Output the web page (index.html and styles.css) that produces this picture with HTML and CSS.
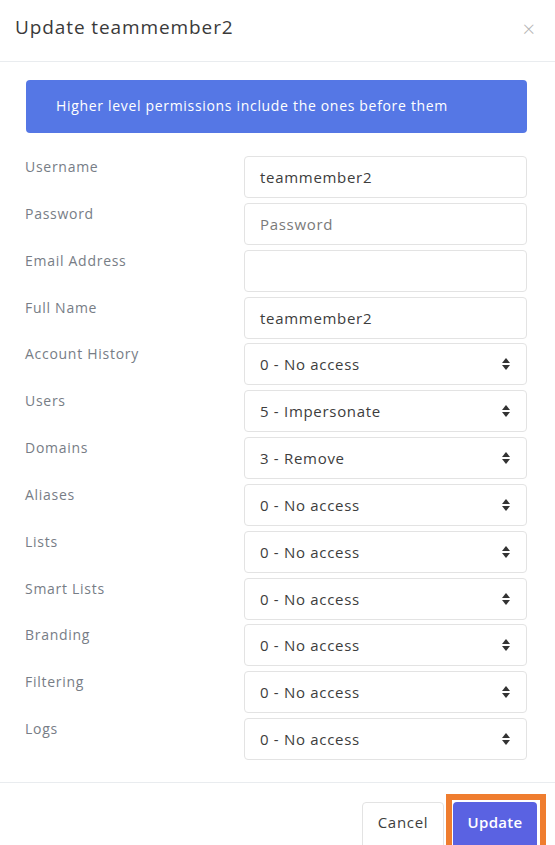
FILE: index.html
```html
<!DOCTYPE html>
<html>
<head>
<meta charset="utf-8">
<link rel="stylesheet" href="styles.css">
</head>
<body>
<div class="modal">
  <div class="modal-header">
    <h1 class="modal-title">Update teammember2</h1>
    <span class="close">&times;</span>
  </div>
  <div class="modal-body">
    <div class="alert">Higher level permissions include the ones before them</div>
    <div class="form">
      <label class="lbl">Username</label><div class="field">teammember2</div>
      <label class="lbl">Password</label><div class="field placeholder">Password</div>
      <label class="lbl">Email Address</label><div class="field"></div>
      <label class="lbl">Full Name</label><div class="field">teammember2</div>
      <label class="lbl">Account History</label><div class="field select">0 - No access<span class="arrows"></span></div>
      <label class="lbl">Users</label><div class="field select">5 - Impersonate<span class="arrows"></span></div>
      <label class="lbl">Domains</label><div class="field select">3 - Remove<span class="arrows"></span></div>
      <label class="lbl">Aliases</label><div class="field select">0 - No access<span class="arrows"></span></div>
      <label class="lbl">Lists</label><div class="field select">0 - No access<span class="arrows"></span></div>
      <label class="lbl">Smart Lists</label><div class="field select">0 - No access<span class="arrows"></span></div>
      <label class="lbl">Branding</label><div class="field select">0 - No access<span class="arrows"></span></div>
      <label class="lbl">Filtering</label><div class="field select">0 - No access<span class="arrows"></span></div>
      <label class="lbl">Logs</label><div class="field select">0 - No access<span class="arrows"></span></div>
    </div>
  </div>
  <div class="modal-footer">
    <button class="btn btn-cancel">Cancel</button>
    <div class="focus-ring"><button class="btn btn-update">Update</button></div>
  </div>
</div>
</body>
</html>
```
FILE: styles.css
```css
* { box-sizing: border-box; }
html, body { margin: 0; padding: 0; background: #fff; }
body {
  font-family: "Open Sans", "Noto Sans", sans-serif;
  color: #3d3d3d;
  width: 555px;
  height: 845px;
  overflow: hidden;
}
.modal { width: 555px; }
.modal-header {
  height: 62px;
  border-bottom: 1px solid #e9ecef;
  display: flex;
  align-items: center;
  justify-content: space-between;
  padding: 0 20px 0 15px;
}
.modal-title {
  margin: 0 0 8px 0;
  font-size: 19px;
  font-weight: 500;
  color: #3a3a3a;
  letter-spacing: 0.9px;
}
.close {
  font-size: 22px;
  color: #b5b5b5;
  font-weight: 300;
  margin-bottom: 6px;
}
.modal-body {
  padding: 18px 28px 22px 25px;
}
.alert {
  margin-left: 1px;
  height: 53px;
  background: #5577e5;
  border-radius: 4px;
  color: #fff;
  font-size: 14px;
  letter-spacing: 0.68px;
  display: flex;
  align-items: center;
  padding: 0 0 2px 30px;
}
.form {
  margin-top: 23px;
  display: grid;
  grid-template-columns: 219px 283px;
  row-gap: 4.85px;
}
.lbl {
  font-size: 14px;
  letter-spacing: 0.72px;
  color: #777d86;
  padding-top: 1px;
}
.field {
  height: 42px;
  border: 1px solid #e3e3e3;
  border-radius: 4px;
  display: flex;
  align-items: center;
  padding: 0 15px;
  font-size: 15px;
  letter-spacing: 0.7px;
  color: #3d3d3d;
  position: relative;
}
.field.placeholder { color: #7a7a7a; }
.arrows {
  position: absolute;
  right: 16px;
  top: 50%;
  width: 8px;
  height: 12px;
  margin-top: -6px;
}
.arrows::before, .arrows::after {
  content: "";
  position: absolute;
  left: 0;
  border-left: 4px solid transparent;
  border-right: 4px solid transparent;
}
.arrows::before { top: 0; border-bottom: 5px solid #333; }
.arrows::after { bottom: 0; border-top: 5px solid #333; }
.modal-footer {
  border-top: 1px solid #e9ecef;
  height: 62px;
  display: flex;
  justify-content: flex-end;
  align-items: flex-start;
  padding: 11px 9px 0 0;
}
.btn {
  font-family: inherit;
  font-size: 15px;
  letter-spacing: 0.7px;
  border-radius: 4px;
  height: 48px;
  padding: 0 0 8px 0;
}
.btn-cancel {
  margin-top: 8px;
  width: 82px;
  background: #fff;
  border: 1px solid #e3e3e3;
  color: #3d3d3d;
  margin-right: 2px;
}
.focus-ring {
  border: 6px solid #ef7d2f;
  border-bottom: none;
  padding: 2px 3px 0 1px;
  height: 60px;
}
.btn-update {
  width: 84px;
  background: #5a62e2;
  border: none;
  color: #fff;
  font-weight: 600;
  letter-spacing: 0.3px;
}
```
